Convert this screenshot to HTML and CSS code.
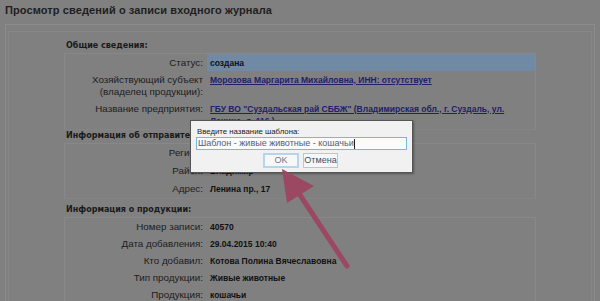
FILE: index.html
```html
<!DOCTYPE html>
<html lang="ru">
<head>
<meta charset="utf-8">
<title>Просмотр сведений о записи входного журнала</title>
<link rel="stylesheet" href="styles.css">
</head>
<body>
<div class="page">
  <h1 class="title">Просмотр сведений о записи входного журнала</h1>
  <div class="panel">
    <div class="inner">
      <div class="section sec-general">
        <div class="sec-head">Общие сведения:</div>
        <div class="box">
          <div class="row"><div class="lbl">Статус:</div><div class="val hl">создана</div></div>
          <div class="row"><div class="lbl">Хозяйствующий субъект<br>(владелец продукции):</div><div class="val"><a class="link" href="#">Морозова Маргарита Михайловна, ИНН: отсутствует</a></div></div>
          <div class="row"><div class="lbl">Название предприятия:</div><div class="val"><a class="link" href="#">ГБУ ВО "Суздальская рай СББЖ" (Владимирская обл., г. Суздаль, ул. Ленина, д. 116 )</a></div></div>
        </div>
      </div>
      <div class="section sec-sender">
        <div class="sec-head">Информация об отправителе:</div>
        <div class="box">
          <div class="row"><div class="lbl">Регион:</div><div class="val">Владимирская обл.</div></div>
          <div class="row"><div class="lbl">Район:</div><div class="val">Владимир</div></div>
          <div class="row"><div class="lbl">Адрес:</div><div class="val">Ленина пр., 17</div></div>
        </div>
      </div>
      <div class="section sec-product">
        <div class="sec-head">Информация о продукции:</div>
        <div class="box">
          <div class="row"><div class="lbl">Номер записи:</div><div class="val">40570</div></div>
          <div class="row"><div class="lbl">Дата добавления:</div><div class="val">29.04.2015 10:40</div></div>
          <div class="row"><div class="lbl">Кто добавил:</div><div class="val">Котова Полина Вячеславовна</div></div>
          <div class="row"><div class="lbl">Тип продукции:</div><div class="val">Живые животные</div></div>
          <div class="row"><div class="lbl">Продукция:</div><div class="val">кошачьи</div></div>
        </div>
      </div>
    </div>
  </div>
</div>

<div class="dialog">
  <div class="dlg-label">Введите название шаблона:</div>
  <div class="dlg-input">Шаблон - живые животные - кошачьи<span class="caret"></span></div>
  <div class="dlg-buttons">
    <button class="btn btn-ok">OK</button>
    <button class="btn">Отмена</button>
  </div>
</div>

<svg class="arrow" width="600" height="301" viewBox="0 0 600 301" xmlns="http://www.w3.org/2000/svg">
  <line x1="347" y1="266" x2="298" y2="192" stroke="#9b4862" stroke-width="5" stroke-linecap="round"/>
  <polygon points="282,169 287,203 314,186" fill="#9b4862"/>
</svg>
</body>
</html>
```

FILE: styles.css
```css
* { box-sizing: border-box; }
html, body { margin: 0; padding: 0; }
body {
  background: #808080;
  font-family: "Liberation Sans", Arial, sans-serif;
  color: #141414;
  width: 600px;
  height: 301px;
  overflow: hidden;
  position: relative;
}
.page { width: 600px; }
.title {
  margin: 0;
  padding: 3px 0 0 5px;
  height: 24px;
  font-size: 11px;
  line-height: 14px;
  font-weight: bold;
  color: #1e1e1e;
  letter-spacing: 0.1px;
}
.panel {
  margin: 0 5px;
  border: 1px solid #8c8c8c;
  border-bottom: none;
  padding: 6px 2px 0 2px;
  height: 280px;
}
.inner {
  border: 1px solid #878787;
  border-bottom: none;
  height: 280px;
  padding: 8px 0 0 55px;
}
.section { width: 472px; }
.sec-product .sec-head { margin-top: 5px; }
.sec-head {
  font-family: "DejaVu Sans", Verdana, sans-serif;
  font-weight: bold;
  font-size: 8px;
  line-height: 12px;
  padding-left: 2px;
  margin-bottom: 1px;
  color: #1a1a1a;
}
.box {
  border: 1px solid #888888;
  border-bottom-color: #848484;
}
.row {
  display: grid;
  grid-template-columns: 142px 1fr;
}
.lbl {
  text-align: right;
  padding: 2.5px 4px 2.5px 0;
  font-size: 9.8px;
  line-height: 12px;
  color: #1c1c1c;
}
.val {
  padding: 2.5px 4px 2.5px 3px;
  font-size: 8.5px;
  line-height: 12px;
  font-weight: bold;
  color: #111;
}
.sec-sender .lbl,
.sec-sender .val {
  padding-top: 3px;
  padding-bottom: 3px;
}
.val.hl { background: #7089a5; }
.link {
  color: #20206c;
  text-decoration: underline;
}

.dialog {
  position: absolute;
  left: 190px;
  top: 120px;
  width: 223px;
  height: 53px;
  background: #f1f1f1;
  border: 1px solid #555;
  box-shadow: 1px 1px 2px rgba(0,0,0,0.35);
  padding: 5px 5px 0 5px;
}
.dlg-label {
  font-size: 7.8px;
  line-height: 11px;
  height: 11px;
  color: #222;
  padding-left: 1px;
}
.dlg-input {
  height: 13px;
  border: 1px solid #7db6dc;
  background: #fbfbfb;
  font-size: 9px;
  line-height: 11px;
  color: #4f6079;
  padding-left: 1px;
  display: flex;
  align-items: center;
  white-space: nowrap;
}
.caret {
  display: inline-block;
  width: 1px;
  height: 10px;
  background: #222;
}
.dlg-buttons {
  display: flex;
  justify-content: center;
  gap: 4px;
  margin-top: 3px;
  padding-right: 2px;
}
.btn {
  font-family: "Liberation Sans", Arial, sans-serif;
  font-size: 9px;
  line-height: 11px;
  height: 15px;
  padding: 0;
  margin: 0;
  background: #f7f7f7;
  border: 1px solid #a9cbe4;
  color: #3f5066;
  width: 35px;
}
.btn-ok {
  width: 36px;
  border: 2px solid #b3d6ee;
  color: #6b7a88;
}
.arrow {
  position: absolute;
  left: 0;
  top: 0;
  pointer-events: none;
}
```
